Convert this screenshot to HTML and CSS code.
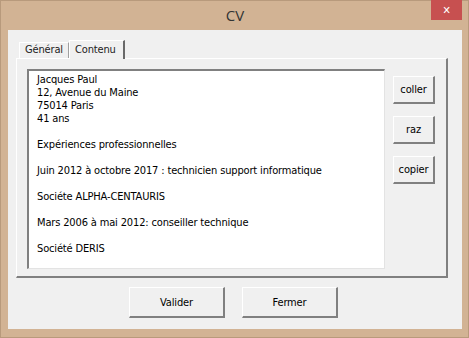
FILE: index.html
```html
<!DOCTYPE html>
<html lang="fr">
<head>
    <meta charset="UTF-8">
    <meta name="viewport" content="width=device-width, initial-scale=1.0">
    <title>CV</title>
    <link rel="stylesheet" href="styles.css">
</head>
<body>
    <div class="window">
        <div class="titlebar">
            <div></div>
            <div class="title">CV</div>
            <div class="close">&#x2715;</div>
        </div>

        <div class="client">
            <div class="tabs">
                <div class="tab">Général</div>
                <div class="tab active">Contenu</div>
            </div>

            <div class="panel">
                <div class="textbox">
                    <div>Jacques Paul</div>
                    <div>12, Avenue du Maine</div>
                    <div>75014 Paris</div>
                    <div>41 ans</div>
                    <div class="blank"></div>
                    <div>Expériences professionnelles</div>
                    <div class="blank"></div>
                    <div>Juin 2012 à octobre 2017 : technicien support informatique</div>
                    <div class="blank"></div>
                    <div>Sociéte ALPHA-CENTAURIS</div>
                    <div class="blank"></div>
                    <div>Mars 2006 à mai 2012: conseiller technique</div>
                    <div class="blank"></div>
                    <div>Société DERIS</div>
                </div>

                <div class="side-buttons">
                    <button class="btn small">coller</button>
                    <button class="btn small">raz</button>
                    <button class="btn small">copier</button>
                </div>
            </div>

            <div class="footer">
                <button class="btn big">Valider</button>
                <button class="btn big">Fermer</button>
            </div>
        </div>
    </div>
</body>
</html>
```

FILE: styles.css
```css
body {
    margin: 0;
    font-family: "DejaVu Sans Condensed", "DejaVu Sans", sans-serif;
    font-size: 11px;
    letter-spacing: -0.15px;
    color: #000;
}

.window {
    width: 469px;
    height: 338px;
    box-sizing: border-box;
    background-color: #d2b394;
    border: 1px solid #b89a7c;
    padding: 0 6px 8px 7px;
}

.titlebar {
    display: grid;
    grid-template-columns: 1fr auto 1fr;
    height: 29px;
}

.title {
    font-family: "Open Sans", sans-serif;
    font-size: 15px;
    letter-spacing: 0;
    color: #333;
    padding-top: 4px;
}

.close {
    justify-self: end;
    width: 31px;
    height: 20px;
    margin-top: -1px;
    background-color: #c75050;
    color: white;
    font-size: 11px;
    display: flex;
    justify-content: center;
    align-items: center;
}

.client {
    background-color: #f0f0f0;
    height: 299px;
    padding: 9px 14px 0 8px;
    box-sizing: border-box;
}

.tabs {
    display: flex;
    align-items: flex-end;
    padding-left: 3px;
    height: 19px;
}

.tab {
    background-color: #f0f0f0;
    border: 1px solid #fff;
    border-bottom: none;
    border-right: 1px solid #a0a0a0;
    padding: 0 5px 0 5px;
    height: 15px;
    line-height: 14px;
    color: #222;
}

.tab.active {
    height: 18px;
    line-height: 17px;
    padding: 0 7px 0 5px;
    border-right: 2px solid #696969;
    margin-bottom: -1px;
    position: relative;
    z-index: 1;
}

.panel {
    display: flex;
    height: 220px;
    box-sizing: border-box;
    border-top: 1px solid #fff;
    border-left: 1px solid #fff;
    border-right: 2px solid #808080;
    border-bottom: 2px solid #808080;
    padding: 10px 0 0 10px;
}

.textbox {
    width: 358px;
    height: 200px;
    box-sizing: border-box;
    background-color: #fff;
    border-top: 2px solid #808080;
    border-left: 2px solid #808080;
    border-right: 1px solid #e3e3e3;
    border-bottom: 1px solid #e3e3e3;
    padding: 2px 8px;
    line-height: 13px;
}

.blank {
    height: 13px;
}

.side-buttons {
    display: flex;
    flex-direction: column;
    gap: 12px;
    margin-left: 8px;
    padding-top: 7px;
}

.btn {
    font-family: inherit;
    font-size: 11px;
    letter-spacing: -0.15px;
    color: #000;
    background-color: #f0f0f0;
    border-top: 1px solid #fff;
    border-left: 1px solid #fff;
    border-right: 2px solid #808080;
    border-bottom: 2px solid #808080;
    padding: 0;
    box-sizing: border-box;
}

.btn.small {
    width: 42px;
    height: 28px;
}

.footer {
    display: flex;
    gap: 17px;
    padding: 9px 0 0 3px;
    justify-content: center;
}

.btn.big {
    width: 96px;
    height: 31px;
}
```
